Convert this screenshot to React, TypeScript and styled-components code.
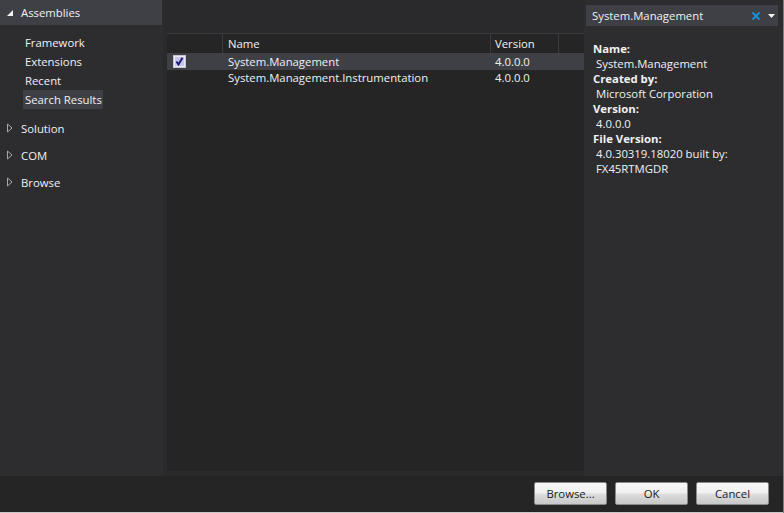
import React from "react";
import styled, { createGlobalStyle } from "styled-components";

const Global = createGlobalStyle`
  html, body { margin: 0; padding: 0; background: #2d2d30; }
  body { font-family: "Open Sans", "Noto Sans", "Liberation Sans", sans-serif; font-size: 11.33px; color: #f1f1f1; overflow: hidden; }
`;

const Dialog = styled.div`
  width: 784px; height: 513px; box-sizing: border-box; border-right: 1px solid #7d7d80;
  display: flex; flex-direction: column; background: #2d2d30; overflow: hidden;
`;
const Main = styled.div`
  display: flex; height: 476px; flex: none;
`;
const Sidebar = styled.nav`
  width: 163px; flex: none; display: flex; flex-direction: column;
`;
const GroupHeader = styled.div<{ $active?: boolean; $gap?: number }>`
  height: ${p => (p.$active ? 25 : 18)}px;
  margin-top: ${p => p.$gap ?? 0}px;
  display: flex; align-items: center; gap: 7px; padding-left: 6px;
  background: ${p => (p.$active ? "#3f3f46" : "transparent")};
  margin-right: ${p => (p.$active ? 1 : 0)}px;
`;
const Arrow = styled.svg`
  width: 8px; height: 10px; flex: none;
`;
const SubList = styled.div`
  display: flex; flex-direction: column; align-items: flex-start; padding: 8px 0 9px 23px;
`;
const SubItem = styled.div<{ $selected?: boolean }>`
  height: 19px; line-height: 19px; padding: 0 1px 0 2px;
  background: ${p => (p.$selected ? "#3f3f46" : "transparent")};
`;
const Center = styled.section`
  flex: none; width: 421px; padding: 33px 0 5px 4px; box-sizing: border-box; display: flex; background: #2a2a2c;
`;
const Table = styled.div`
  flex: 1; background: #252526; border-top: 1px solid #3a3a3f; display: flex; flex-direction: column;
`;
const HeaderRow = styled.div`
  display: grid; grid-template-columns: 56px 268px 68px 1fr; height: 19px;
`;
const HeaderCell = styled.div<{ $pad?: number }>`
  border-right: 1px solid #3a3a3f; padding-left: ${p => p.$pad ?? 5}px; line-height: 19px;
  &:last-child { border-right: none; }
`;
const Row = styled.div<{ $selected?: boolean }>`
  display: grid; grid-template-columns: 56px 267px 68px 1fr;
  height: ${p => (p.$selected ? 17 : 16)}px; line-height: ${p => (p.$selected ? 17 : 16)}px;
  background: ${p => (p.$selected ? "#3f3f46" : "transparent")};
`;
const CheckCell = styled.div`
  display: flex; align-items: center; padding-left: 6px;
`;
const Checkbox = styled.svg`
  width: 13px; height: 13px; display: block;
`;
const Cell = styled.div`
  padding-left: 5px; white-space: nowrap;
`;
const Details = styled.aside`
  flex: 1; padding: 5px 5px 0 2px; display: flex; flex-direction: column; min-width: 0;
`;
const SearchBox = styled.div`
  height: 21px; background: #3f3f46; display: flex; align-items: center; padding: 0 3px 0 6px;
`;
const SearchText = styled.span`
  flex: 1;
`;
const Clear = styled.svg`
  width: 10px; height: 10px; margin-right: 7px;
`;
const Caret = styled.svg`
  width: 7px; height: 4px;
`;
const Info = styled.div`
  padding: 15px 0 0 7px; line-height: 15px; display: flex; flex-direction: column;
`;
const Label = styled.div`
  font-weight: 700;
`;
const Value = styled.div`
  padding-left: 3px; width: 140px;
`;
const Footer = styled.footer`
  height: 37px; box-sizing: border-box; background: #252526; border-bottom: 1px solid #c9c9c9; display: flex;
  justify-content: flex-end; align-items: flex-start; gap: 8px; padding: 6px 14px 0 0;
`;
const Button = styled.button`
  width: 73px; height: 23px; box-sizing: border-box; border: 1px solid #8a8a8a; border-radius: 2px;
  background: linear-gradient(#f8f8f8, #f0f0f0 45%, #dcdcdc 55%, #c8c8c8);
  color: #1a1a1a; font: 11.33px "Open Sans", "Noto Sans", sans-serif; padding: 0;
`;

const Closed = () => (
  <Arrow viewBox="0 0 8 10"><path d="M1.5 1 L6 5 L1.5 9 Z" fill="none" stroke="#a8a8a8" /></Arrow>
);
const Open = () => (
  <Arrow viewBox="0 0 8 10"><path d="M7 2 V8 H1 Z" fill="#f1f1f1" /></Arrow>
);

export default function App() {
  return (
    <Dialog>
      <Global />
      <Main>
        <Sidebar>
          <GroupHeader $active><Open />Assemblies</GroupHeader>
          <SubList>
            <SubItem>Framework</SubItem>
            <SubItem>Extensions</SubItem>
            <SubItem>Recent</SubItem>
            <SubItem $selected>Search Results</SubItem>
          </SubList>
          <GroupHeader $gap={1}><Closed />Solution</GroupHeader>
          <GroupHeader $gap={9}><Closed />COM</GroupHeader>
          <GroupHeader $gap={9}><Closed />Browse</GroupHeader>
        </Sidebar>
        <Center>
          <Table>
            <HeaderRow>
              <HeaderCell />
              <HeaderCell>Name</HeaderCell>
              <HeaderCell $pad={4}>Version</HeaderCell>
              <HeaderCell />
            </HeaderRow>
            <Row $selected>
              <CheckCell>
                <Checkbox viewBox="0 0 13 13">
                  <rect x="0.5" y="0.5" width="12" height="12" fill="#ebebf7" stroke="#c4c4d2" />
                  <rect x="2" y="2" width="9" height="9" fill="#c6c6e8" />
                  <path d="M3.5 6.5 L5.5 9.5 L9.5 2.8" fill="none" stroke="#1e1a78" strokeWidth="2" />
                </Checkbox>
              </CheckCell>
              <Cell>System.Management</Cell>
              <Cell>4.0.0.0</Cell>
              <div />
            </Row>
            <Row>
              <div />
              <Cell>System.Management.Instrumentation</Cell>
              <Cell>4.0.0.0</Cell>
              <div />
            </Row>
          </Table>
        </Center>
        <Details>
          <SearchBox>
            <SearchText>System.Management</SearchText>
            <Clear viewBox="0 0 10 10"><path d="M1.5 1.5 L8.5 8.5 M8.5 1.5 L1.5 8.5" stroke="#1a8fd8" strokeWidth="2" /></Clear>
            <Caret viewBox="0 0 7 4"><path d="M0 0 H7 L3.5 4 Z" fill="#f1f1f1" /></Caret>
          </SearchBox>
          <Info>
            <Label>Name:</Label>
            <Value>System.Management</Value>
            <Label>Created by:</Label>
            <Value>Microsoft Corporation</Value>
            <Label>Version:</Label>
            <Value>4.0.0.0</Value>
            <Label>File Version:</Label>
            <Value>4.0.30319.18020 built by: FX45RTMGDR</Value>
          </Info>
        </Details>
      </Main>
      <Footer>
        <Button>Browse...</Button>
        <Button>OK</Button>
        <Button>Cancel</Button>
      </Footer>
    </Dialog>
  );
}
